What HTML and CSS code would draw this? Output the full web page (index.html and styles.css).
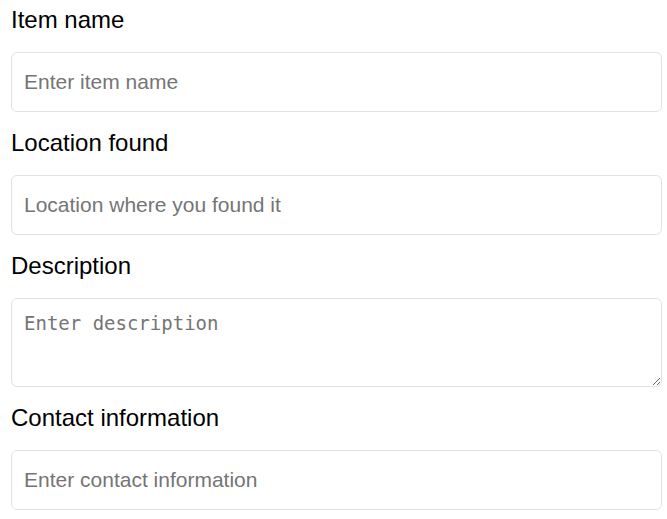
FILE: index.html
```html
<!DOCTYPE html>
<html lang="en">
<head>
<meta charset="utf-8">
<title>Found item</title>
<link rel="stylesheet" href="styles.css">
</head>
<body>
<form class="form">
  <div class="field">
    <label class="label" for="name">Item name</label>
    <input class="input" id="name" type="text" placeholder="Enter item name">
  </div>
  <div class="field">
    <label class="label" for="loc">Location found</label>
    <input class="input" id="loc" type="text" placeholder="Location where you found it">
  </div>
  <div class="field">
    <label class="label" for="desc">Description</label>
    <textarea class="textarea" id="desc" placeholder="Enter description"></textarea>
  </div>
  <div class="field">
    <label class="label" for="contact">Contact information</label>
    <input class="input" id="contact" type="text" placeholder="Enter contact information">
  </div>
</form>
</body>
</html>
```
FILE: styles.css
```css
html, body {
  margin: 0;
  padding: 0;
  background: #ffffff;
}

body {
  font-family: "Liberation Sans", Arial, sans-serif;
  color: #000000;
}

.form {
  display: flex;
  flex-direction: column;
  gap: 18px;
  padding: 7px 5px 0 11px;
}

.field {
  display: flex;
  flex-direction: column;
}

.label {
  display: block;
  font-size: 24px;
  line-height: 26px;
  margin-bottom: 19px;
}

.input,
.textarea {
  box-sizing: border-box;
  display: block;
  width: 100%;
  margin: 0;
  border: 1px solid #e2e2e2;
  border-radius: 6px;
  background: #ffffff;
  color: #000000;
  outline: none;
}

.input {
  height: 60px;
  padding: 0 12px;
  font-family: "Liberation Sans", Arial, sans-serif;
  font-size: 21px;
}

.textarea {
  height: 89px;
  padding: 13px 12px 11px;
  font-family: "DejaVu Sans Mono", "Liberation Mono", monospace;
  font-size: 19px;
  line-height: 22px;
  resize: both;
}

.input::placeholder,
.textarea::placeholder {
  color: #757575;
  opacity: 1;
}
```
